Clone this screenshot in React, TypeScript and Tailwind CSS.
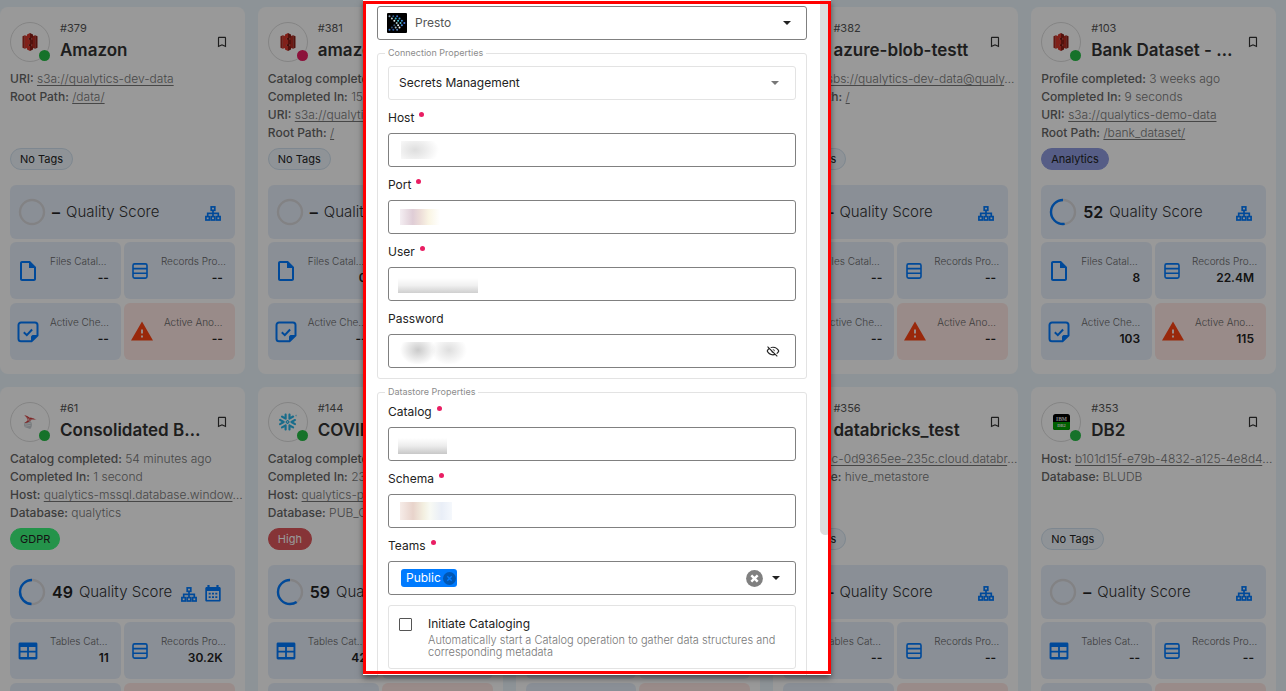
import React, { useState } from "react";
import { MdBookmarkBorder, MdOutlineInsertDriveFile, MdWarning } from "react-icons/md";
import { SiSnowflake } from "react-icons/si";

/* ---------- icons ---------- */

function SitemapIcon() {
  return (
    <svg viewBox="0 0 16 15" className="h-[15px] w-4 shrink-0" fill="none" stroke="#007bff" strokeWidth="1.7">
      <rect x="6.2" y="0.9" width="3.6" height="3.4" />
      <path d="M8 4.3v6M2.7 10.3V7.3h10.6v3" />
      <rect x="0.9" y="10.6" width="3.5" height="3.4" />
      <rect x="6.2" y="10.6" width="3.6" height="3.4" />
      <rect x="11.6" y="10.6" width="3.5" height="3.4" />
    </svg>
  );
}

function CalendarIcon() {
  return (
    <svg viewBox="0 0 16 17" className="h-[17px] w-4 shrink-0">
      <path fill="#007bff" d="M2.400 0h2.200v2h6.800V0h2.200v2h.8c.7 0 1.300.6 1.300 1.300v11.900c0 .8-.6 1.400-1.300 1.400H1.700c-.8 0-1.400-.6-1.400-1.400V3.300C.3 2.600.9 2 1.700 2h.7z" />
      <rect x="2" y="6" width="12" height="8.900" fill="#e7effb" />
      <path stroke="#007bff" strokeWidth="1.700" strokeDasharray="2 1.300" d="M3.700 8.600h8.700M3.700 12.100h8.700" />
    </svg>
  );
}

function RowsIcon() {
  return (
    <svg viewBox="0 0 16 16" className="size-4" fill="none" stroke="#007bff" strokeWidth="1.6">
      <rect x="1" y="0.900" width="14" height="14.200" rx="1.600" />
      <path d="M1 5.600h14M1 10.300h14" />
    </svg>
  );
}

function TableIcon() {
  return (
    <svg viewBox="0 0 20 18" className="h-[18px] w-5">
      <path
        fill="#007bff"
        fillRule="evenodd"
        d="M2 .5h16c.8 0 1.400.6 1.400 1.400v14.200c0 .8-.6 1.400-1.400 1.400H2c-.8 0-1.400-.6-1.400-1.400V1.900C.6 1.100 1.200.5 2 .5zM2.500 5v3.800h6.600V5zm8.400 0v3.800h6.600V5zM2.500 10.600v4.500h6.600v-4.500zm8.400 0v4.500h6.600v-4.500z"
      />
    </svg>
  );
}

function CheckNoteIcon() {
  return (
    <svg viewBox="0 0 22 22" className="size-[22px]" fill="none" stroke="#007bff" strokeWidth="2">
      <path d="M14.500 20.300H4A2.500 2.500 0 0 1 1.500 17.800V4A2.500 2.500 0 0 1 4 1.500h14A2.500 2.500 0 0 1 20.500 4v10.500z" strokeLinejoin="round" />
      <path d="M14.500 20.300v-4.500c0-.8.5-1.300 1.300-1.300h4.700z" fill="#007bff" strokeWidth="1" />
      <path d="M6.800 11.200l3 2.900 5.300-5.600" />
    </svg>
  );
}

function FileIcon() {
  return <MdOutlineInsertDriveFile className="size-[26px] text-[#007bff]" />;
}

function AlertIcon() {
  return <MdWarning className="size-[25px] text-[#ff4413]" />;
}

function EyeOffIcon() {
  return (
    <svg viewBox="0 0 24 24" className="size-[14px]" fill="#222">
      <path d="M2,5.27L3.28,4L20,20.72L18.73,22L15.65,18.92C14.5,19.3 13.28,19.5 12,19.5C7,19.5 2.73,16.39 1,12C1.69,10.24 2.79,8.69 4.19,7.46L2,5.27M12,9A3,3 0 0,1 15,12C15,12.35 14.94,12.69 14.83,13L11,9.17C11.31,9.06 11.65,9 12,9M12,4.5C17,4.5 21.27,7.61 23,12C22.18,14.08 20.79,15.88 19,17.19L17.58,15.76C18.94,14.82 20.06,13.54 20.82,12C19.17,8.64 15.76,6.5 12,6.5C10.91,6.5 9.84,6.68 8.84,7L7.3,5.47C8.74,4.85 10.33,4.5 12,4.5M3.18,12C4.83,15.36 8.24,17.5 12,17.5C12.69,17.5 13.37,17.43 14,17.29L11.72,15C10.29,14.85 9.15,13.71 9,12.28L5.6,8.87C4.61,9.72 3.78,10.78 3.18,12Z" />
    </svg>
  );
}

function Caret({ color }: { color: string }) {
  return (
    <svg viewBox="0 0 8 4" className="h-1 w-2" fill={color}>
      <path d="M0 0h8L4 4z" />
    </svg>
  );
}

/* ---------- logos ---------- */

function S3Logo() {
  return (
    <svg viewBox="0 0 16 18" className="h-[18px] w-4">
      <path fill="#a8281e" d="M.5 3.300L2.800 2.300v13.400L.5 14.700z" />
      <path fill="#d8382c" d="M2.800 2.300L6.600 3.500v11l-3.800 1.200z" />
      <path fill="#8a1f17" d="M15.500 3.300l-2.300-1v13.400l2.300-1z" />
      <path fill="#b52c22" d="M13.200 2.300L9.400 3.500v11l3.800 1.200z" />
      <path fill="#6b150f" d="M6.600 4h2.800v10H6.600z" />
      <path fill="#d8382c" d="M8 0L5 1.400v3l3 .8zM8 18l-3-1.400v-3l3-.8z" />
      <path fill="#8a1f17" d="M8 0l3 1.400v3l-3 .8zM8 18l3-1.400v-3l-3-.8z" />
      <path fill="#d8382c" d="M8 6.400l-3 .5v4.200l3 .5z" />
      <path fill="#8a1f17" d="M8 6.400l3 .5v4.200l-3 .5z" />
    </svg>
  );
}

function SqlServerLogo() {
  return (
    <svg viewBox="0 0 16 16" className="size-4">
      <path fill="#c8cdd2" d="M2.500 8.500l5.500-2 1.600 2.200c.6 2.600.2 4.700-1.400 6.300L3 13.200c-1.200-.9-1-2.900-.5-4.700z" />
      <path fill="none" d="M3 10.300l5.800-1.100M3.200 12.200l5.400-.9" stroke="#fff" strokeWidth=".6" />
      <path fill="#d23b3b" d="M2.300 1.200c2 .2 3.800 1 5.200 2.200 2.400.2 4.900 1 7 2.500-1.800-.4-3.400-.4-4.700-.1L5.500 8.600c-1.200.4-2.200.5-3.100.3 1.300-.7 2.500-1.700 3.400-2.900C4.900 4 3.800 2.400 2.300 1.200z" />
      <path stroke="#fff" strokeWidth=".4" fill="none" d="M4 2.500l3.500 4M7.500 3.400L5.800 6.500l5-1.500" />
    </svg>
  );
}

function SnowflakeLogo() {
  return <SiSnowflake className="size-[18px] text-[#29b5e8]" />;
}

function Db2Logo() {
  return (
    <svg viewBox="0 0 17 16" className="h-4 w-[17px]">
      <rect width="17" height="16" rx="2.500" fill="#000" />
      <path d="M0 8h17v5.500a2.500 2.500 0 0 1-2.500 2.500h-12A2.500 2.500 0 0 1 0 13.500z" fill="#00a000" />
      <text x="8.500" y="6.900" textAnchor="middle" fontSize="5.500" fontWeight="700" fontFamily="Liberation Serif, serif" fill="#ddd">
        IBM
      </text>
      <text x="8.500" y="13.400" textAnchor="middle" fontSize="4.500" fontWeight="700" fontFamily="Liberation Serif, serif" fill="#eee">
        DB2
      </text>
    </svg>
  );
}

const chevrons = [
  { start: 2.5, colors: ["#8aa0b4", "#b9c9cf", "#dfe9ea", "#9fc5c5", "#34506e", "#2b4b73", "#3b6fc4"] },
  { start: 6.3, colors: ["#2f5d8a", "#38b5c8", "#41c8d8", "#5ac5d0", "#e6f1f1", "#9db7c2", "#2b5aa5"] },
  { start: 10.1, colors: ["#3b6fc4", "#3f97d8", "#3f97d8", "#4b79e0", "#4b8fe0", "#f2f6f6", "#5a82b8"] },
];

function PrestoLogo() {
  return (
    <svg viewBox="0 0 20 20" className="size-5">
      <rect width="20" height="20" rx="1" fill="#000" />
      {chevrons.map(({ start, colors }) =>
        colors.map((fill, k) => (
          <circle key={`${start}-${k}`} cx={start + (3 - Math.abs(k - 3)) * 2.4} cy={3.2 + k * 2.25} r="1" fill={fill} />
        )),
      )}
    </svg>
  );
}

/* ---------- datastore cards ---------- */

type Info = { label: string; value: string; link?: boolean; cut?: boolean };
type Store = {
  id: string;
  name: string;
  logo?: React.ReactNode;
  status: string;
  info: Info[];
  tag: string;
  tagClass: string;
  score?: number;
  scheduled?: boolean;
  tables?: boolean;
  cataloged: string;
  records: string;
  checks: string;
  anomalies: string;
};

const green = "bg-[#26be46]";
const pink = "bg-[#e91e63]";
const noTag = "border-[#d3e2f0] bg-[#eff6fc] text-[#222]";
const empty = { cataloged: "--", records: "--", checks: "--", anomalies: "--" };

const stores: Store[] = [
  {
    ...empty, id: "#379", name: "Amazon", logo: <S3Logo />, status: green, tag: "No Tags", tagClass: noTag,
    info: [
      { label: "URI:", value: "s3a://qualytics-dev-data", link: true },
      { label: "Root Path:", value: "/data/", link: true },
    ],
  },
  {
    ...empty, id: "#381", name: "amazon", logo: <S3Logo />, status: pink, tag: "No Tags", tagClass: noTag, cataloged: "0",
    info: [
      { label: "Catalog completed:", value: "" },
      { label: "Completed In:", value: "15 seconds" },
      { label: "URI:", value: "s3a://qualytics-dev", link: true },
      { label: "Root Path:", value: "/", link: true },
    ],
  },
  { ...empty, id: "", name: "", status: green, tag: "No Tags", tagClass: noTag, info: [] },
  {
    ...empty, id: "#382", name: "azure-blob-testt", status: green, tag: "No Tags", tagClass: noTag,
    info: [
      { label: "URI:", value: "wasbs://qualytics-dev-data@qualy", link: true, cut: true },
      { label: "Root Path:", value: "/", link: true },
    ],
  },
  {
    id: "#103", name: "Bank Dataset - …", logo: <S3Logo />, status: green, tag: "Analytics",
    tagClass: "border-[#8f9ce0] bg-[#8f9ce0] text-[#222]", score: 52,
    cataloged: "8", records: "22.4M", checks: "103", anomalies: "115",
    info: [
      { label: "Profile completed:", value: "3 weeks ago" },
      { label: "Completed In:", value: "9 seconds" },
      { label: "URI:", value: "s3a://qualytics-demo-data", link: true },
      { label: "Root Path:", value: "/bank_dataset/", link: true },
    ],
  },
  {
    ...empty, id: "#61", name: "Consolidated B…", logo: <SqlServerLogo />, status: green, tag: "GDPR",
    tagClass: "border-[#3df57c] bg-[#3df57c] text-[#222]", score: 49, scheduled: true, tables: true,
    cataloged: "11", records: "30.2K",
    info: [
      { label: "Catalog completed:", value: "54 minutes ago" },
      { label: "Completed In:", value: "1 second" },
      { label: "Host:", value: "qualytics-mssql.database.window", link: true, cut: true },
      { label: "Database:", value: "qualytics" },
    ],
  },
  {
    ...empty, id: "#144", name: "COVID", logo: <SnowflakeLogo />, status: green, tag: "High",
    tagClass: "border-[#e0585c] bg-[#e0585c] text-[#fff]", score: 59, tables: true, cataloged: "42",
    info: [
      { label: "Catalog completed:", value: "" },
      { label: "Completed In:", value: "23 seconds" },
      { label: "Host:", value: "qualytics-prod", link: true },
      { label: "Database:", value: "PUB_COVID" },
    ],
  },
  { ...empty, id: "", name: "", status: green, tag: "No Tags", tagClass: noTag, tables: true, info: [] },
  {
    ...empty, id: "#356", name: "databricks_test", status: green, tag: "No Tags", tagClass: noTag, tables: true,
    info: [
      { label: "Host:", value: "dbc-0d9365ee-235c.cloud.databr", link: true, cut: true },
      { label: "Database:", value: "hive_metastore" },
    ],
  },
  {
    ...empty, id: "#353", name: "DB2", logo: <Db2Logo />, status: green, tag: "No Tags", tagClass: noTag, tables: true,
    info: [
      { label: "Host:", value: "b101d15f-e79b-4832-a125-4e8d4", link: true, cut: true },
      { label: "Database:", value: "BLUDB" },
    ],
  },
];

function ScoreRing({ score = 0 }: { score?: number }) {
  const length = 2 * Math.PI * 12;
  return (
    <svg viewBox="0 0 28 28" className="size-7 shrink-0" fill="none" strokeWidth="2.400">
      <circle cx="14" cy="14" r="12" stroke="#d9d9dc" />
      {score > 0 && (
        <circle
          cx="14" cy="14" r="12" stroke="#007bff"
          strokeDasharray={`${(length * score) / 100} ${length}`}
          transform="translate(28 0) scale(-1 1) rotate(-90 14 14)"
        />
      )}
    </svg>
  );
}

type StatProps = { icon: React.ReactNode; label: string; value: string; narrow?: boolean; alert?: boolean };

function Stat({ icon, label, value, narrow, alert }: StatProps) {
  return (
    <div className={`flex h-[57px] items-center gap-2.5 rounded-md pr-3 pl-1.5 ${alert ? "bg-[#ffe8e4]" : "bg-[#e7effb]"}`}>
      <span className={`flex shrink-0 justify-center ${narrow ? "w-[21px]" : "w-6"}`}>{icon}</span>
      <div className="min-w-0 flex-1 pb-px">
        <div className="text-[10px] leading-4 font-light whitespace-nowrap text-[#666]">{label}</div>
        <div className="text-right text-xs leading-[18px] font-semibold text-[#222]">{value}</div>
      </div>
    </div>
  );
}

function StoreCard({ store }: { store: Store }) {
  return (
    <article className="min-w-0 rounded-lg bg-white px-2.5 pt-[15px] pb-3.5">
      <header className="flex h-10 items-center gap-2.5">
        <div className="relative flex size-10 shrink-0 items-center justify-center rounded-full border border-[#ddd]">
          {store.logo}
          <span className={`absolute -right-px bottom-0 size-[11px] rounded-full ${store.status}`} />
        </div>
        <div className="min-w-0 flex-1 self-start">
          <div className="h-3 text-[11px] leading-3 text-[#555]">{store.id}</div>
          <h2 className="mt-1 text-[17px] leading-6 font-semibold whitespace-nowrap text-[#333]">{store.name}</h2>
        </div>
        <button type="button" aria-label="Bookmark" className="mr-1.5">
          <MdBookmarkBorder className="size-[14px] text-[#333]" />
        </button>
      </header>
      <div className="mt-2 h-[72px]">
        {store.info.map((row) => (
          <p key={row.label} className="text-xs leading-[18px] font-light whitespace-nowrap text-[#777]">
            <span className="font-medium text-[#666]">{row.label}</span>{" "}
            {row.link ? <a href="#" className="underline underline-offset-2">{row.value}</a> : row.value}
            {row.cut && "…"}
          </p>
        ))}
      </div>
      <div className="mt-1.5 flex">
        <span className={`h-[22px] rounded-full border px-[9px] text-[11px] leading-5 ${store.tagClass}`}>{store.tag}</span>
      </div>
      <div className="mt-[15px] flex h-[54px] items-center rounded-md bg-[#e7effb] pr-3.5 pl-2">
        <ScoreRing score={store.score} />
        <span className="ml-1.5 text-base font-semibold text-[#222]">{store.score ?? "–"}</span>
        <span className="ml-1.5 flex-1 text-[15px] font-light whitespace-nowrap text-[#333]">Quality Score</span>
        <div className="flex items-end gap-2 pt-0.5">
          <SitemapIcon />
          {store.scheduled && <CalendarIcon />}
        </div>
      </div>
      <div className="mt-[3px] grid grid-cols-2 gap-x-[3px] gap-y-1">
        <Stat
          icon={store.tables ? <TableIcon /> : <FileIcon />}
          label={store.tables ? "Tables Cat…" : "Files Catal…"}
          value={store.cataloged}
        />
        <Stat icon={<RowsIcon />} label="Records Pro…" value={store.records} narrow />
        <Stat icon={<CheckNoteIcon />} label="Active Che…" value={store.checks} />
        <Stat icon={<AlertIcon />} label="Active Ano…" value={store.anomalies} alert />
      </div>
    </article>
  );
}

/* ---------- datastore form ---------- */

function FieldLabel({ htmlFor, required, children }: { htmlFor: string; required?: boolean; children: React.ReactNode }) {
  return (
    <label htmlFor={htmlFor} className="mb-[7px] flex h-4 gap-[5px] text-xs leading-4 text-[#222]">
      {children}
      {required && <span className="mt-0.5 size-[5px] rounded-full bg-[#e91e63]" />}
    </label>
  );
}

type FieldProps = { id: string; label: string; required?: boolean; type?: string; mask: string; children?: React.ReactNode };

function Field({ id, label, required, type = "text", mask, children }: FieldProps) {
  return (
    <div>
      <FieldLabel htmlFor={id} required={required}>{label}</FieldLabel>
      <div className="relative flex h-[34px] items-center rounded-[3px] border border-[#808080] pr-[15px]">
        <input id={id} type={type} className="h-full min-w-0 flex-1 bg-transparent px-3 text-xs outline-none" />
        <span className={`pointer-events-none absolute ${mask}`} />
        {children}
      </div>
    </div>
  );
}

function Section({ title, className, children }: { title: string; className: string; children: React.ReactNode }) {
  return (
    <fieldset className="mt-[7px] rounded-[3px] border border-[#e3e3e3] px-2.5 pb-2.5">
      <legend className="-ml-[3px] px-[3px] text-[9px] leading-3 text-[#8c8c8c]">{title}</legend>
      <div className={`flex flex-col gap-2.5 ${className}`}>{children}</div>
    </fieldset>
  );
}

function DatastoreDialog() {
  const [catalog, setCatalog] = useState(false);
  return (
    <div role="dialog" aria-modal="true" className="relative h-[calc(100vh-16px)] w-[468px] overflow-hidden bg-white shadow-[0_3px_6px_rgba(0,0,0,0.5)]">
      <form className="pt-1.5 pr-6 pl-3.5">
        <div className="relative">
          <select aria-label="Presto" className="h-[34px] w-full appearance-none rounded-[3px] border border-[#808080] bg-white pr-8 pl-[37px] text-xs text-[#555]">
            <option>Presto</option>
          </select>
          <span className="pointer-events-none absolute inset-y-0 left-2.5 flex items-center"><PrestoLogo /></span>
          <span className="pointer-events-none absolute inset-y-0 right-4 flex items-center"><Caret color="#222" /></span>
        </div>

        <Section title="Connection Properties" className="pt-[7px]">
          <button type="button" className="flex h-[34px] items-center justify-between rounded-[3px] border border-[#e3e3e3] pr-4 pl-2.5 text-xs text-[#222]">
            Secrets Management
            <Caret color="#777" />
          </button>
          <Field id="host" label="Host" required mask="left-3 top-[7px] h-[18px] w-10 bg-[radial-gradient(ellipse_24px_16px_at_14px_9px,#dedede,#eeeeee_50%,#ffffff)]" />
          <Field id="port" label="Port" required mask="left-[11px] top-2 h-4 w-10 bg-[linear-gradient(90deg,#f4eef2,#dfcdd6_32%,#ecdcd8_50%,#faf5e4_72%,#ffffff)]" />
          <Field id="user" label="User" required mask="left-[9px] top-2.5 h-[15px] w-20 bg-[linear-gradient(180deg,#ffffff,#f0f0f0_50%,#cfcfcf)]" />
          <Field
            id="password"
            label="Password"
            type="password"
            mask="left-[9px] top-[7px] h-[22px] w-[70px] bg-[radial-gradient(ellipse_18px_15px_at_20px_8px,#cacaca,transparent),radial-gradient(ellipse_18px_15px_at_51px_8px,#dedede,transparent)]"
          >
            <button type="button" aria-label="Show password"><EyeOffIcon /></button>
          </Field>
        </Section>

        <Section title="Datastore Properties" className="pt-1.5">
          <Field id="catalog" label="Catalog" required mask="left-[9px] top-2.5 h-4 w-[49px] bg-[linear-gradient(180deg,#ffffff,#ececec_50%,#c8c8c8)]" />
          <Field id="schema" label="Schema" required mask="left-[11px] top-[7px] h-[18px] w-[52px] bg-[linear-gradient(90deg,#f6ece8,#e8d3cb_25%,#f3efe0_45%,#f8faf4_58%,#e9eef7_80%,#f5f8fc)]" />
          <div>
            <FieldLabel htmlFor="teams" required>Teams</FieldLabel>
            <div className="flex h-[34px] items-center rounded-[3px] border border-[#808080] pr-[15px] pl-3">
              <span className="flex h-[18px] items-center gap-0.5 rounded-[3px] bg-[#007bff] pr-px pl-[5px] text-xs text-white">
                Public
                <button type="button" aria-label="Remove Public">
                  <svg viewBox="0 0 13 13" className="size-[13px]">
                    <circle cx="6.500" cy="6.500" r="6.500" fill="#0057b5" />
                    <path d="M4.300 4.300l4.400 4.400M8.700 4.300L4.300 8.700" stroke="#007bff" strokeWidth="1.400" />
                  </svg>
                </button>
              </span>
              <input id="teams" type="text" className="h-full min-w-0 flex-1 bg-transparent px-1 text-xs outline-none" />
              <button type="button" aria-label="Clear">
                <svg viewBox="0 0 17 17" className="size-[17px]">
                  <circle cx="8.500" cy="8.500" r="8.400" fill="#808080" />
                  <path d="M5.300 5.300l6.400 6.400M11.700 5.300l-6.400 6.400" stroke="#fff" strokeWidth="2.400" />
                </svg>
              </button>
              <span className="ml-[9px]"><Caret color="#222" /></span>
            </div>
          </div>
          <div className="flex h-16 gap-4 rounded-[3px] border border-[#e3e3e3] pt-3 pr-1 pl-2.5">
            <input
              id="initiate"
              type="checkbox"
              checked={catalog}
              onChange={(event) => setCatalog(event.target.checked)}
              className="size-[13px] shrink-0 appearance-none rounded-[1px] border border-[#555] checked:bg-[#007bff]"
            />
            <label htmlFor="initiate" className="-mt-0.5 text-xs leading-4 text-[#222]">
              Initiate Cataloging
              <span className="mt-0.5 block text-[11px] leading-3 font-light text-[#777]">
                Automatically start a Catalog operation to gather data structures and corresponding metadata
              </span>
            </label>
          </div>
          <div className="h-10" />
        </Section>
      </form>
      <div className="absolute top-0 right-0 h-[535px] w-[11px] rounded-b-md bg-[#dcdcdc]" />
      <div className="pointer-events-none absolute inset-x-0 top-px bottom-px border-[3px] border-[#ff0000]" />
    </div>
  );
}

export default function App() {
  return (
    <div className="relative h-screen overflow-hidden bg-[#ecf6fc] font-['Inter','Liberation_Sans',sans-serif]">
      <main className="grid grid-cols-5 gap-[13px] pt-[7px] pr-2.5">
        {stores.map((store, index) => (
          <StoreCard key={index} store={store} />
        ))}
      </main>
      <div className="absolute inset-0 flex items-start justify-center bg-black/40 pr-[92px]">
        <DatastoreDialog />
      </div>
    </div>
  );
}
